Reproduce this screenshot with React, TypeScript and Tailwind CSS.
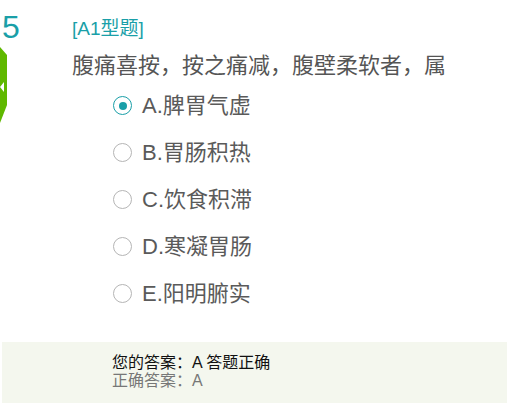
const options = [
  { key: 'A', text: '脾胃气虚', checked: true },
  { key: 'B', text: '胃肠积热', checked: false },
  { key: 'C', text: '饮食积滞', checked: false },
  { key: 'D', text: '寒凝胃肠', checked: false },
  { key: 'E', text: '阳明腑实', checked: false },
];

const Radio = ({ checked }: { checked: boolean }) => {
  if (checked) {
    return (
      <span className="w-[19px] h-[19px] rounded-full border-[1.5px] border-[#1a9fa8] flex items-center justify-center shrink-0">
        <span className="w-[8px] h-[8px] rounded-full bg-[#1a9fa8]" />
      </span>
    );
  }
  return <span className="w-[19px] h-[19px] rounded-full border-[1.5px] border-[#b5b5b5] shrink-0" />;
};

const App = () => {
  return (
    <div className="w-[507px] h-[412px] bg-white overflow-hidden font-[Liberation_Sans,Noto_Sans_CJK_SC,sans-serif]">
      <div className="flex">
        <div className="w-[72px] shrink-0 flex flex-col">
          <div className="pt-[11px] pl-[2px] text-[32px] leading-[32px] text-[#1a9fa8]">5</div>
          <svg className="mt-[4px]" width="8" height="76" viewBox="0 0 8 76">
            <polygon points="0,0 7,8 7,58 0,76" fill="#5fb800" />
            <polygon points="0,40 4,35 4,45" fill="#ffffff" />
          </svg>
        </div>
        <div className="flex-1 pt-[17px]">
          <div className="h-[24px] text-[19px] leading-[24px] text-[#1a9fa8]">[A1型题]</div>
          <div className="mt-[9px] h-[32px] text-[22px] leading-[32px] text-[#555555] whitespace-nowrap">
            腹痛喜按，按之痛减，腹壁柔软者，属
          </div>
          <div className="ml-[41px] flex flex-col">
            {options.map((o) => (
              <div key={o.key} className="h-[47px] flex items-center gap-[10px]">
                <Radio checked={o.checked} />
                <span className="text-[22px] leading-[32px] text-[#5a5a5a]">
                  {o.key}.{o.text}
                </span>
              </div>
            ))}
          </div>
        </div>
      </div>
      <div className="mt-[25px] ml-[2px] h-[61px] bg-[#f4f7ee] pt-[12px] pl-[110px] text-[16px] leading-[18px]">
        <div className="text-[#111111]">您的答案：A 答题正确</div>
        <div className="text-[#777777]">正确答案：A</div>
      </div>
    </div>
  );
};

export default App;
